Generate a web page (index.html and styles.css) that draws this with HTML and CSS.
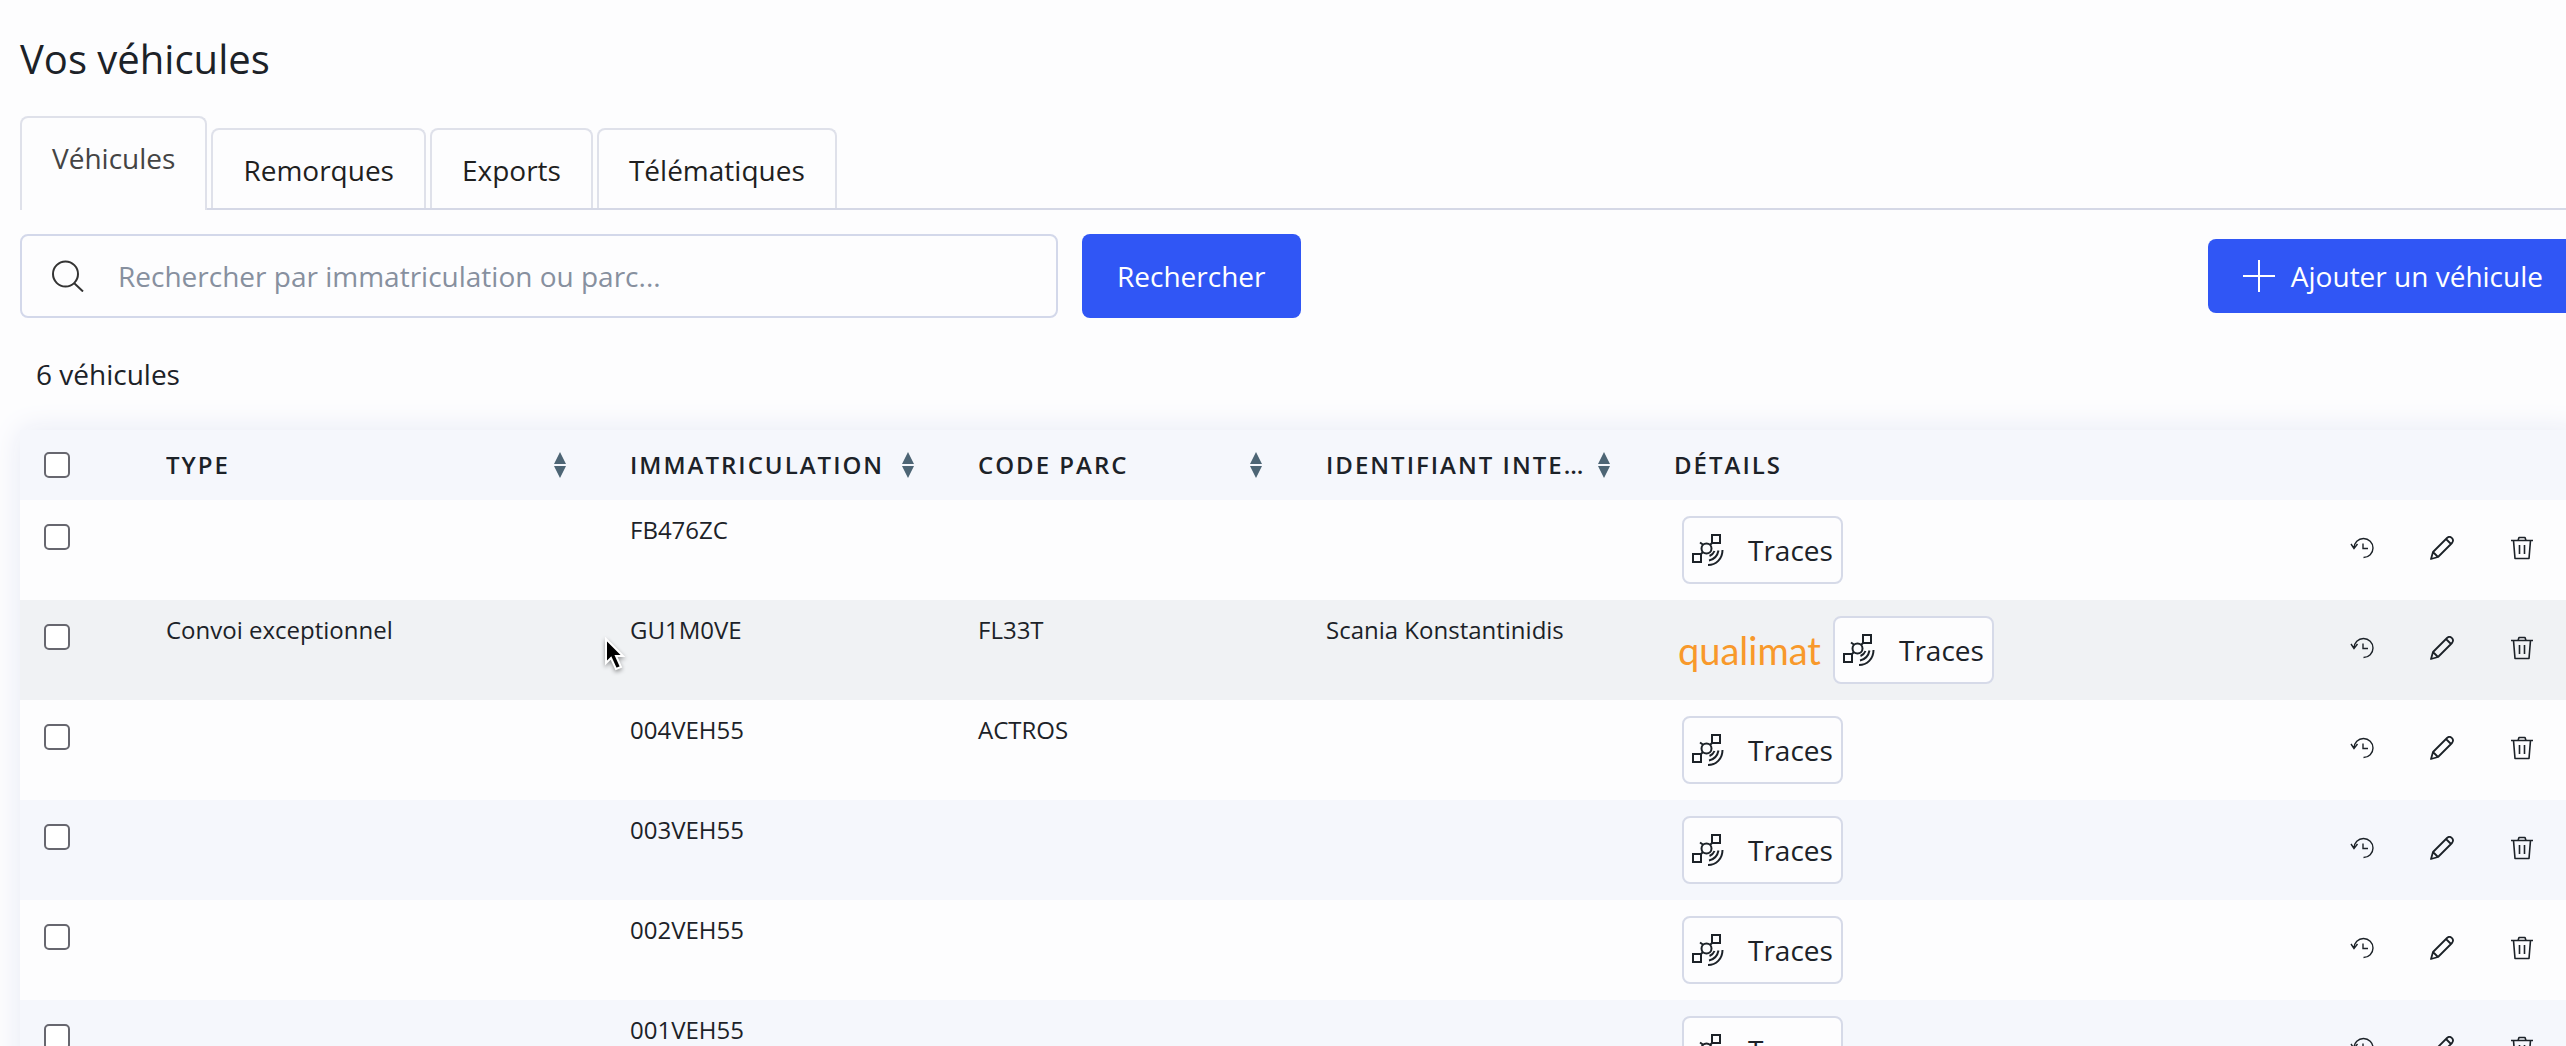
FILE: index.html
```html
<!DOCTYPE html>
<html lang="fr">
<head>
<meta charset="utf-8">
<title>Vos véhicules</title>
<link rel="stylesheet" href="styles.css">
</head>
<body>
<svg class="defs" aria-hidden="true">
  <symbol id="i-sat" viewBox="0 0 32 32"><g fill="none" stroke="currentColor" stroke-width="2"><rect x="20" y="1" width="8" height="8"/><rect x="1" y="20" width="8" height="8"/><circle cx="14.500" cy="14.500" r="5"/><path d="M8 8.500l3.500 2.500M18 11l2-2M9 20l2-2M16 31c8 0 14.500-6 14.500-15M17 26.500c5-1 8.500-5 9.500-10M17.500 22c2.500-1 4-2.500 5-5"/></g></symbol>
  <symbol id="i-hist" viewBox="0 0 24 24"><path fill="none" stroke="currentColor" stroke-width="1.400" d="M4 12A9.500 9.500 0 1 1 13.500 21.500M1 8l3 4.500L7.500 8M13 7.500v5h5"/></symbol>
  <symbol id="i-pen" viewBox="0 0 24 24"><path fill="none" stroke="currentColor" stroke-width="1.800" stroke-linejoin="round" d="M1 23l2-7L17 2c3-3 8 1 5 5L8 21zM3 16l5 5M16 3l5 5"/></symbol>
  <symbol id="i-bin" viewBox="0 0 24 24"><path fill="none" stroke="currentColor" stroke-width="1.600" stroke-linejoin="round" d="M1 4.500h22M3.500 4.500L5 22.500h14L20.500 4.500M8 4.500L9 1.500h6l1 3M9.500 9v9M14.500 9v9"/></symbol>
  <symbol id="i-sort" viewBox="0 0 12 26"><path fill="currentColor" d="M6 0l6 12H0zM0 14h12L6 26z"/></symbol>
</svg>
<main class="page">
  <h1 class="title">Vos véhicules</h1>
  <nav class="tabs">
    <a class="tab tab-active" href="#vehicules">Véhicules</a>
    <a class="tab" href="#remorques">Remorques</a>
    <a class="tab" href="#exports">Exports</a>
    <a class="tab" href="#telematiques">Télématiques</a>
  </nav>
  <form class="toolbar">
    <label class="search">
      <svg class="search-icon" viewBox="0 0 32 32" aria-hidden="true"><path fill="none" stroke="currentColor" stroke-width="2" d="M22 23l9 8.500M26 14A12.500 12.500 0 1 1 1 14a12.500 12.500 0 0 1 25 0z"/></svg>
      <input class="search-input" type="text" aria-label="Rechercher" placeholder="Rechercher par immatriculation ou parc...">
    </label>
    <button class="btn btn-search" type="button">Rechercher</button>
    <button class="btn btn-add" type="button"><svg class="plus" viewBox="0 0 32 32" aria-hidden="true"><path stroke="currentColor" stroke-width="2" d="M0 16h32M16 0v32"/></svg>Ajouter un véhicule</button>
  </form>
  <p class="count">6 véhicules</p>
  <table class="grid">
    <colgroup><col class="c-check"><col class="c-type"><col class="c-mid"><col class="c-mid"><col class="c-mid"><col><col class="c-act"></colgroup>
    <thead>
      <tr>
        <th><input class="check" type="checkbox" aria-label="Tout sélectionner"></th>
        <th><div class="head"><span class="head-text">TYPE</span><svg class="sort"><use href="#i-sort"/></svg></div></th>
        <th><div class="head"><span class="head-text">IMMATRICULATION</span><svg class="sort"><use href="#i-sort"/></svg></div></th>
        <th><div class="head"><span class="head-text">CODE PARC</span><svg class="sort"><use href="#i-sort"/></svg></div></th>
        <th><div class="head"><span class="head-text">IDENTIFIANT INTERNE</span><svg class="sort"><use href="#i-sort"/></svg></div></th>
        <th><div class="head"><span class="head-text">DÉTAILS</span></div></th>
        <th></th>
      </tr>
    </thead>
    <tbody>
      <tr>
        <td><input class="check" type="checkbox" aria-label="FB476ZC"></td><td></td><td>FB476ZC</td><td></td><td></td>
        <td><div class="details"><button class="traces" type="button"><svg class="sat"><use href="#i-sat"/></svg>Traces</button></div></td>
        <td><div class="actions"><button class="act" type="button" aria-label="Historique"><svg class="icon"><use href="#i-hist"/></svg></button><button class="act" type="button" aria-label="Modifier"><svg class="icon"><use href="#i-pen"/></svg></button><button class="act" type="button" aria-label="Supprimer"><svg class="icon"><use href="#i-bin"/></svg></button></div></td>
      </tr>
      <tr class="hovered">
        <td><input class="check" type="checkbox" aria-label="GU1M0VE"></td><td>Convoi exceptionnel</td><td>GU1M0VE</td><td>FL33T</td><td>Scania Konstantinidis</td>
        <td><div class="details"><span class="qualimat">qualimat</span><button class="traces" type="button"><svg class="sat"><use href="#i-sat"/></svg>Traces</button></div></td>
        <td><div class="actions"><button class="act" type="button" aria-label="Historique"><svg class="icon"><use href="#i-hist"/></svg></button><button class="act" type="button" aria-label="Modifier"><svg class="icon"><use href="#i-pen"/></svg></button><button class="act" type="button" aria-label="Supprimer"><svg class="icon"><use href="#i-bin"/></svg></button></div></td>
      </tr>
      <tr>
        <td><input class="check" type="checkbox" aria-label="004VEH55"></td><td></td><td>004VEH55</td><td>ACTROS</td><td></td>
        <td><div class="details"><button class="traces" type="button"><svg class="sat"><use href="#i-sat"/></svg>Traces</button></div></td>
        <td><div class="actions"><button class="act" type="button" aria-label="Historique"><svg class="icon"><use href="#i-hist"/></svg></button><button class="act" type="button" aria-label="Modifier"><svg class="icon"><use href="#i-pen"/></svg></button><button class="act" type="button" aria-label="Supprimer"><svg class="icon"><use href="#i-bin"/></svg></button></div></td>
      </tr>
      <tr>
        <td><input class="check" type="checkbox" aria-label="003VEH55"></td><td></td><td>003VEH55</td><td></td><td></td>
        <td><div class="details"><button class="traces" type="button"><svg class="sat"><use href="#i-sat"/></svg>Traces</button></div></td>
        <td><div class="actions"><button class="act" type="button" aria-label="Historique"><svg class="icon"><use href="#i-hist"/></svg></button><button class="act" type="button" aria-label="Modifier"><svg class="icon"><use href="#i-pen"/></svg></button><button class="act" type="button" aria-label="Supprimer"><svg class="icon"><use href="#i-bin"/></svg></button></div></td>
      </tr>
      <tr>
        <td><input class="check" type="checkbox" aria-label="002VEH55"></td><td></td><td>002VEH55</td><td></td><td></td>
        <td><div class="details"><button class="traces" type="button"><svg class="sat"><use href="#i-sat"/></svg>Traces</button></div></td>
        <td><div class="actions"><button class="act" type="button" aria-label="Historique"><svg class="icon"><use href="#i-hist"/></svg></button><button class="act" type="button" aria-label="Modifier"><svg class="icon"><use href="#i-pen"/></svg></button><button class="act" type="button" aria-label="Supprimer"><svg class="icon"><use href="#i-bin"/></svg></button></div></td>
      </tr>
      <tr>
        <td><input class="check" type="checkbox" aria-label="001VEH55"></td><td></td><td>001VEH55</td><td></td><td></td>
        <td><div class="details"><button class="traces" type="button"><svg class="sat"><use href="#i-sat"/></svg>Traces</button></div></td>
        <td><div class="actions"><button class="act" type="button" aria-label="Historique"><svg class="icon"><use href="#i-hist"/></svg></button><button class="act" type="button" aria-label="Modifier"><svg class="icon"><use href="#i-pen"/></svg></button><button class="act" type="button" aria-label="Supprimer"><svg class="icon"><use href="#i-bin"/></svg></button></div></td>
      </tr>
    </tbody>
  </table>
</main>
<svg class="cursor" viewBox="0 0 24 36" aria-hidden="true"><path fill="#000" stroke="#fff" stroke-width="2" d="M3 2v24l5-5 5 11 5-2-5-11h7z"/></svg>
</body>
</html>
```
FILE: styles.css
```css
* { box-sizing: border-box; }
body {
  margin: 0;
  height: 100vh;
  overflow: hidden;
  background: #fdfdfe;
  color: #1c2228;
  font: 28px/40px "Open Sans", "Noto Sans", sans-serif;
}
.defs { position: absolute; width: 0; height: 0; }
/* the content runs slightly past the right edge of the window */
.page { padding: 32px 0 0 20px; margin-right: -12px; }
.title { margin: 0; font-size: 40px; line-height: 54px; font-weight: 400; }
.tabs {
  display: flex;
  align-items: flex-end;
  gap: 4px;
  margin-top: 30px;
  border-bottom: 2px solid #d5d8e6;
}
.tab {
  padding: 20px 30px 18px;
  border: 2px solid #dfe1ea;
  border-bottom: 0;
  border-radius: 8px 8px 0 0;
  color: #1f1f1f;
  text-decoration: none;
}
.tab-active {
  padding-bottom: 32px;
  margin-bottom: -2px;
  background: #fdfdfe;
  color: #444;
}
.toolbar { display: flex; align-items: center; gap: 24px; margin-top: 24px; }
.search {
  display: flex;
  align-items: center;
  width: 1038px;
  height: 84px;
  padding-left: 30px;
  border: 2px solid #d3d8ea;
  border-radius: 8px;
}
.search-icon { width: 32px; height: 32px; color: #333; flex: none; }
.search-input {
  flex: 1;
  margin-left: 34px;
  padding: 0;
  border: 0;
  outline: 0;
  background: none;
  font: inherit;
}
.search-input::placeholder { color: #87909f; opacity: 1; }
.btn {
  display: flex;
  align-items: center;
  padding: 0 35px;
  border: 0;
  border-radius: 8px;
  background: #3056f5;
  color: #fff;
  font: inherit;
}
.btn-search { height: 84px; }
.btn-add { height: 74px; gap: 16px; margin-left: auto; }
.plus { width: 32px; height: 32px; }
.count { margin: 36px 0 0; padding-left: 16px; }
.grid {
  width: 100%;
  margin-top: 36px;
  border-collapse: collapse;
  table-layout: fixed;
  box-shadow: 0 0 28px #e6e9f5;
  font-size: 24px;
  line-height: 32px;
}
.c-check { width: 126px; }
.c-type { width: 464px; }
.c-mid { width: 348px; }
.c-act { width: 260px; }
.grid th {
  height: 70px;
  padding: 0 44px 0 20px;
  background: #f5f7fc;
  text-align: left;
  font-weight: 600;
  letter-spacing: 2px;
  vertical-align: middle;
}
.head { display: flex; align-items: center; justify-content: space-between; gap: 12px; }
.head-text { overflow: hidden; white-space: nowrap; text-overflow: ellipsis; }
.sort { width: 12px; height: 26px; color: #4d6575; flex: none; }
.grid td { height: 100px; padding: 14px 20px 0; background: #fdfdfe; vertical-align: top; }
.grid tbody tr:nth-child(even) td { background: #f5f7fc; }
.grid tbody tr.hovered:nth-child(n) td { background: #f0f2f4; }
.grid th:first-child, .grid td:first-child { padding-left: 24px; }
.check {
  appearance: none;
  display: block;
  width: 26px;
  height: 26px;
  margin: 0;
  border: 2px solid #67676f;
  border-radius: 5px;
  background: #fff;
}
.grid td .check { margin-top: 10px; }
.details { display: flex; align-items: center; gap: 4px; padding-top: 2px; }
.qualimat {
  margin-left: 4px;
  color: #f8992b;
  font: 38px/40px Lato, sans-serif;
}
.traces {
  display: flex;
  align-items: center;
  gap: 24px;
  height: 68px;
  margin-left: 8px;
  padding: 0 8px;
  border: 2px solid #d6dae8;
  border-radius: 8px;
  background: #fdfdfe;
  color: inherit;
  font: 28px/40px "Open Sans", "Noto Sans", sans-serif;
}
.sat { width: 32px; height: 32px; }
.actions { display: flex; justify-content: flex-end; gap: 56px; padding: 22px 24px 0 0; }
.act { display: flex; padding: 0; border: 0; background: none; color: inherit; }
.icon { width: 24px; height: 24px; }
.cursor {
  position: absolute;
  left: 603px;
  top: 637px;
  width: 24px;
  height: 36px;
  filter: drop-shadow(0 2px 2px rgba(0, 0, 0, .4));
}
```
